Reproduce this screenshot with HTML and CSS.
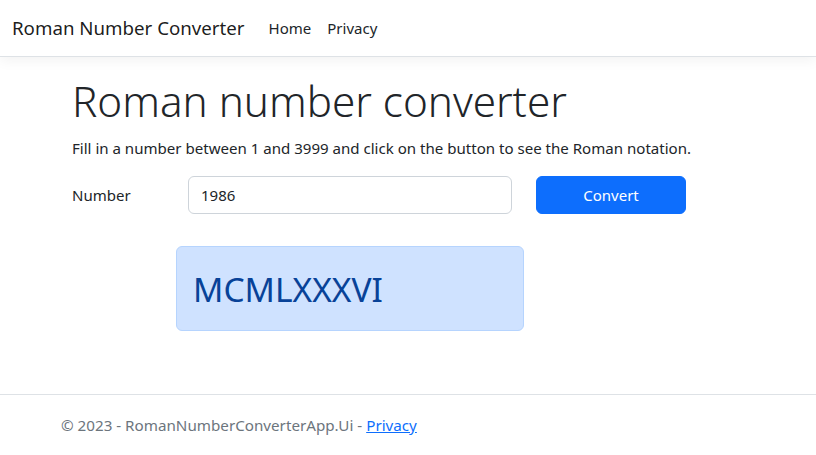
FILE: index.html
```html
<!DOCTYPE html>
<html lang="en">
<head>
<meta charset="utf-8">
<title>Roman Number Converter</title>
<link rel="stylesheet" href="styles.css">
</head>
<body>
<header class="navbar">
  <a class="brand" href="#">Roman Number Converter</a>
  <nav class="nav">
    <a class="nav-link" href="#">Home</a>
    <a class="nav-link" href="#">Privacy</a>
  </nav>
</header>
<main class="container">
  <div class="content">
    <h1 class="display">Roman number converter</h1>
    <p class="lead-text">Fill in a number between 1 and 3999 and click on the button to see the Roman notation.</p>
    <form class="convert-form">
      <label class="form-label" for="number">Number</label>
      <input class="form-control" id="number" type="text" value="1986">
      <button class="btn-primary" type="button">Convert</button>
    </form>
    <div class="alert">
      <h2 class="result">MCMLXXXVI</h2>
    </div>
  </div>
</main>
<footer class="footer">
  <div class="container footer-inner">&copy; 2023 - RomanNumberConverterApp.Ui - <a href="#" class="footer-link">Privacy</a></div>
</footer>
</body>
</html>
```
FILE: styles.css
```css
* { box-sizing: border-box; }
html, body { margin: 0; height: 100%; }
body {
  font-family: "Noto Sans", "Open Sans", sans-serif;
  font-size: 15px;
  line-height: 24px;
  color: #212529;
  background: #fff;
  display: flex;
  flex-direction: column;
  min-height: 100vh;
}
.navbar {
  display: flex;
  align-items: center;
  height: 57px;
  padding: 8px 12px;
  border-bottom: 1px solid #dee2e6;
  box-shadow: 0 4px 12px rgba(0,0,0,.05);
}
.brand {
  font-size: 18.7px;
  color: rgba(0,0,0,.9);
  text-decoration: none;
  margin-right: 16px;
  line-height: 30px;
}
.nav { display: flex; }
.nav-link {
  color: #212529;
  text-decoration: none;
  padding: 8px 8px;
}
.container {
  width: 720px;
  margin: 0 auto;
  padding: 0 12px;
}
.content { padding-left: 12px; padding-top: 16px; }
.display {
  font-size: 42.2px;
  font-weight: 300;
  line-height: 55px;
  margin: 0 0 8px;
}
.lead-text { margin: 0 0 16px; font-size: 15.07px; }
.convert-form {
  display: flex;
  align-items: center;
}
.form-label { width: 116px; }
.form-control {
  width: 324px;
  height: 38px;
  padding: 6px 12px;
  font: inherit;
  color: #212529;
  border: 1px solid #ced4da;
  border-radius: 6px;
}
.btn-primary {
  margin-left: 24px;
  width: 150px;
  height: 38px;
  font: inherit;
  color: #fff;
  background: #0d6efd;
  border: 1px solid #0d6efd;
  border-radius: 6px;
}
.alert {
  margin: 32px 0 0 104px;
  width: 348px;
  height: 85px;
  padding: 16px;
  background: #cfe2ff;
  border: 1px solid #b6d4fe;
  border-radius: 6px;
  color: #084298;
}
.result {
  margin: 0;
  font-size: 33.5px;
  font-weight: 400;
  line-height: 41px;
  padding-top: 6px;
}
.footer {
  margin-top: auto;
  border-top: 1px solid #dee2e6;
  height: 61px;
  color: #6c757d;
  line-height: 60px;
  font-size: 15.2px;
}
.footer-inner { padding-left: 13px; }
.footer-link { color: #0d6efd; }
```
